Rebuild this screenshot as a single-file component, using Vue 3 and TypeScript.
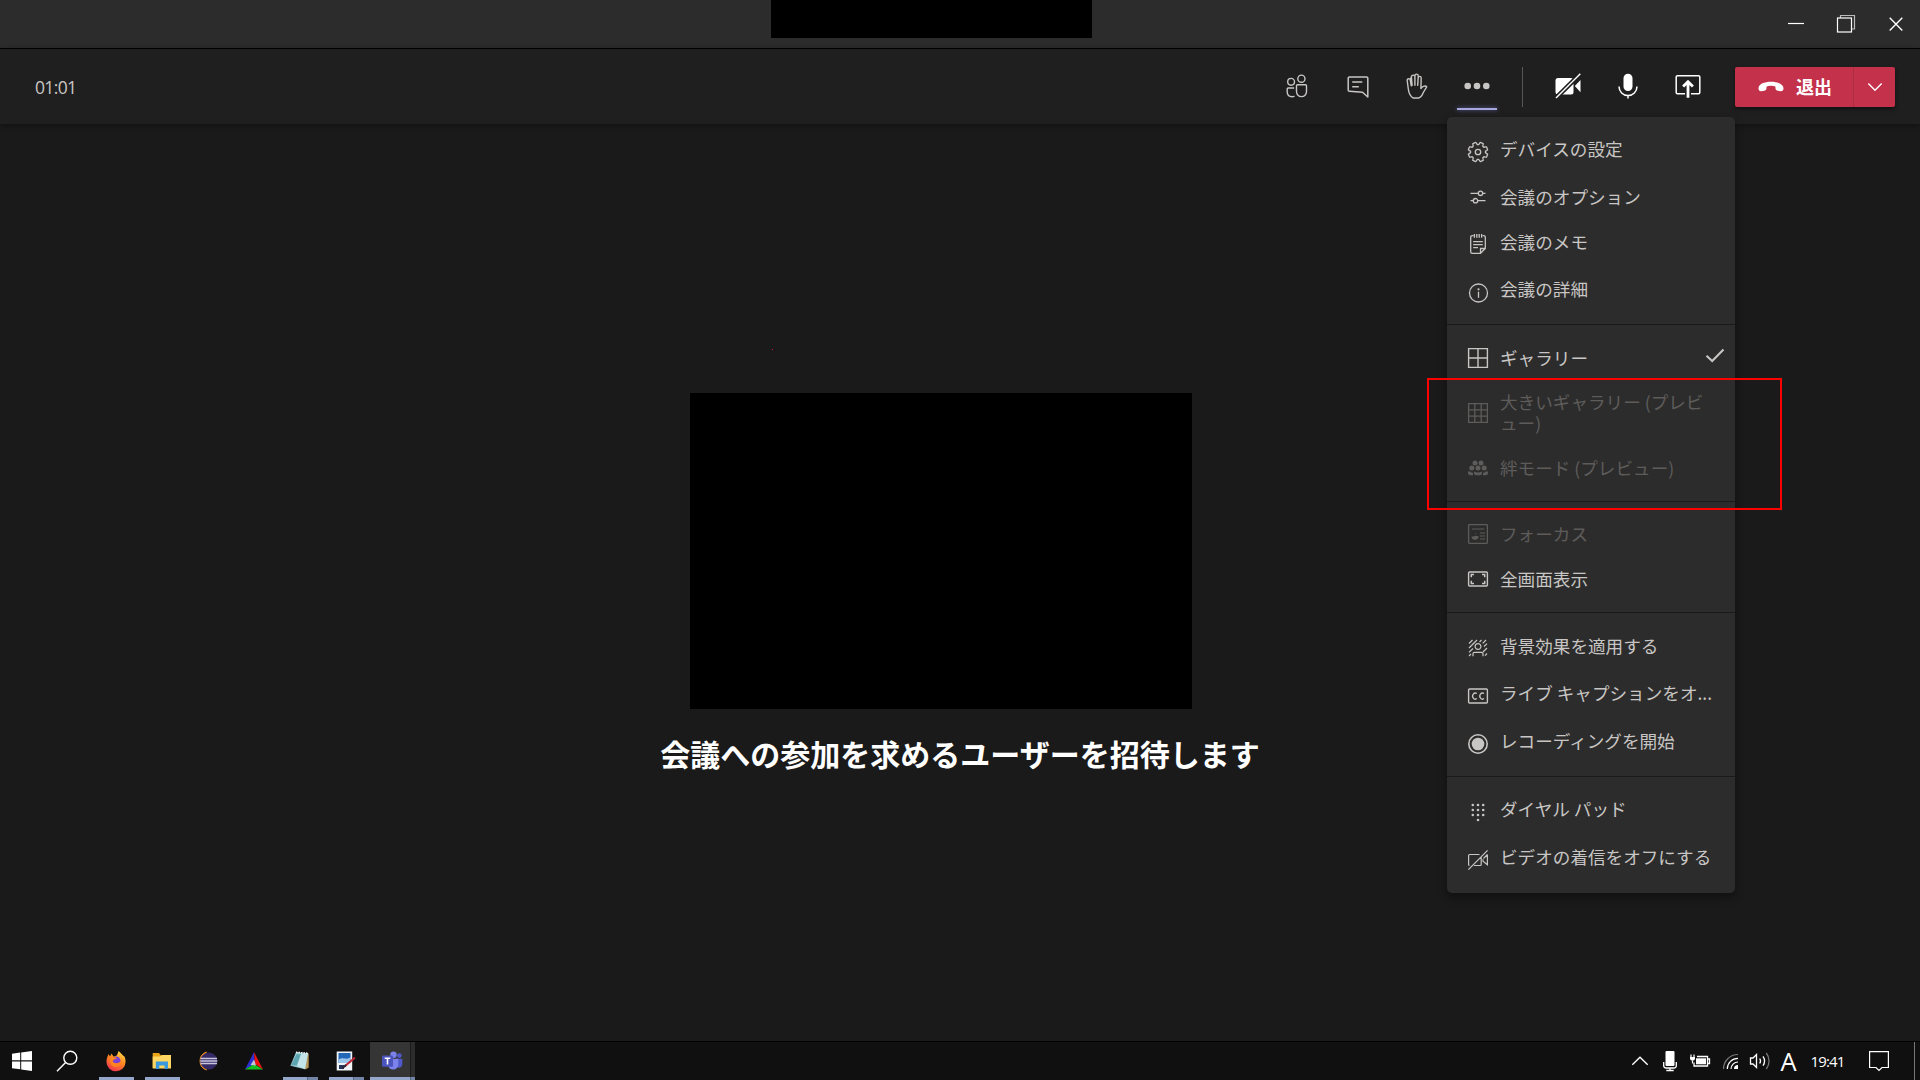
<script setup lang="ts">
interface MenuItem {
  icon: string
  label: string
  height: number
  lift: number
  disabled?: boolean
  checked?: boolean
  wrap?: boolean
}

// Eight-toothed gear outline, centred on the origin.
function gearPath(): string {
  const pts: string[] = []
  for (let i = 0; i < 8; i++) {
    const base = i * 45 + 22.5
    const ring: [number, number][] = [[-13, 8.8], [-9, 9.9], [9, 9.9], [13, 8.8], [16, 7.5], [29, 7.5]]
    for (const [deg, r] of ring) {
      const a = ((base + deg) * Math.PI) / 180
      pts.push(`${(r * Math.sin(a)).toFixed(2)} ${(-r * Math.cos(a)).toFixed(2)}`)
    }
  }
  return `M${pts.join('L')}Z`
}

const icons: Record<string, string> = {
  people:
    '<g fill="none" stroke="#c8c6c4" stroke-width="1.4"><circle cx="-5.9" cy="-4.2" r="3.4"/><circle cx="4.4" cy="-7.3" r="3.6"/><path d="M-2.8 2H-8.8a1 1 0 0 0-1 1V5.8c0 3 2 4.9 4.9 4.9 1 0 1.7-.2 2.4-.6"/><path d="M.5-1.2H8.5a1 1 0 0 1 1 1V5.6a5 5 0 0 1-10 0V-.2a1 1 0 0 1 1-1z"/></g>',
  chat:
    '<g fill="none" stroke="#c8c6c4" stroke-width="1.5" stroke-linejoin="round"><path d="M-8.6-9H8.6a1.2 1.2 0 0 1 1.2 1.2V11L4.5 6.2L-8.5 5.2a1.3 1.3 0 0 1-1.3-1.3V-7.8A1.2 1.2 0 0 1-8.6-9z"/><path d="M-5.8-3.9H4.3M-5.8.7H.8"/></g>',
  hand:
    '<path d="M-5.7-.2L-6.8-6a1.5 1.5 0 0 0-3 .5L-8.7 3C-8.2 7.5-6.5 10.2-4 12H1.5C4 11.5 5.3 9.3 6.3 6.5L9.7.9C8.6-1 5.5.2 3.9 2.6L4.2-8.1a1.5 1.5 0 0 0-3 0L.7-.8M1.2-8V-10.2a1.65 1.65 0 0 0-3.3 0V-.8M-2.1-9.2a1.6 1.6 0 0 0-3.5.1L-4.9-.8M-5.6-9L-6.9-6.5" fill="none" stroke="#c8c6c4" stroke-width="1.4" stroke-linejoin="round" stroke-linecap="round"/>',
  more: '<g fill="#c8c6c4"><circle cx="-9.3" r="3.3"/><circle r="3.3"/><circle cx="9.3" r="3.3"/></g>',
  camOff:
    '<g fill="#fff"><rect x="-12.5" y="-8" width="18" height="16.5" rx="2.5"/><path d="M6.8 0L12.5-6V6.2Z"/></g><path d="M-12.4 12.3L12.3-12.2" stroke="#201f1f" stroke-width="4.6"/><path d="M-12 12L12.3-12.2" stroke="#fff" stroke-width="1.4"/>',
  mic:
    '<rect x="-4.5" y="-12.3" width="9" height="17.3" rx="4.5" fill="#fff"/><path d="M-9 .6a9 9 0 0 0 18 0M0 9.600V12.5" fill="none" stroke="#fff" stroke-width="1.5"/>',
  share:
    '<rect x="-11.8" y="-10.2" width="23.6" height="18" rx="1.2" fill="none" stroke="#fff" stroke-width="1.5"/><path d="M0 6.5V9.5" stroke="#201f1f" stroke-width="6"/><path d="M0 11.8V-3M-4.9.6L0-4.3L4.9.6" fill="none" stroke="#fff" stroke-width="2.8"/>',
  phone:
    '<path d="M-12.500 1.3C-12.5-7.3 12.5-7.3 12.5 1.3C12.5 3.4 11.5 4.4 9.5 4.2L6.6 3.7C5 3.4 4.6 2.6 4.5 1.3L4.4-.6C2-1.5-2-1.5-4.4-.6L-4.5 1.3C-4.6 2.6-5 3.4-6.6 3.7L-9.5 4.2C-11.5 4.4-12.5 3.4-12.5 1.3Z" fill="#fff"/>',
  gear: `<g fill="none" stroke="currentColor" stroke-width="1.3" stroke-linejoin="round"><path d="${gearPath()}"/><circle r="2.7"/></g>`,
  sliders:
    '<g fill="none" stroke="currentColor" stroke-width="1.3"><path d="M-7.5-3.7H.1M4.9-3.7H7.5M-7.5 3.7H-4.9M-.1 3.7H7.5"/><circle cx="2.5" cy="-3.7" r="2.2"/><circle cx="-2.5" cy="3.7" r="2.2"/></g>',
  memo:
    '<g fill="none" stroke="currentColor" stroke-width="1.3"><path d="M-4.500-8.4H-5.7A1.600 1.6 0 0 0-7.3-6.8V7.7a1.6 1.6 0 0 0 1.6 1.6H2.5L7.3 4.5V-6.8a1.6 1.6 0 0 0-1.6-1.6H4.5M2.5 9.3V4.5H7.3"/><path d="M-3.6-10V-6.200M-1.2-10V-6.2M1.2-10V-6.2M3.6-10V-6.2M-4.8-2.3H4.8M-4.8.7H4.8M-4.8 3.7H0"/></g>',
  info:
    '<circle cx=".5" r="9" fill="none" stroke="currentColor" stroke-width="1.3"/><path d="M.5-1.3V4.8" stroke="currentColor" stroke-width="1.3"/><circle cx=".5" cy="-3.7" r="1.1" fill="currentColor"/>',
  grid2:
    '<path d="M-9.4-9.4H9.4V9.4H-9.4ZM0-9.4V9.4M-9.4 0H9.4" fill="none" stroke="currentColor" stroke-width="1.4"/>',
  grid3:
    '<path d="M-9.4-9.4H9.4V9.4H-9.4ZM-3.2-9.4V9.4M3.2-9.4V9.4M-9.4-3.2H9.4M-9.4 3.2H9.4" fill="none" stroke="currentColor" stroke-width="1.3"/>',
  together:
    '<g fill="currentColor"><circle cx="-3" cy="-5" r="2.5"/><circle cx="3" cy="-5" r="2.5"/><circle cx="-6.2" r="2.5"/><circle r="2.500"/><circle cx="6.2" r="2.5"/><path d="M-10 3.600h2a4.500 4.500 0 0 0 3 1.200v2.400h-2.500a2.500 2.500 0 0 1-2.500-2.500zM-4 3.600q4 1.800 8 0v1.100a2.500 2.500 0 0 1-2.500 2.500h-3a2.500 2.500 0 0 1-2.500-2.500zM10 3.600h-2a4.500 4.500 0 0 1-3 1.200v2.400h2.500a2.500 2.500 0 0 0 2.500-2.500z"/></g>',
  focus:
    '<rect x="-9.4" y="-9.4" width="18.8" height="18.8" rx=".8" fill="none" stroke="currentColor" stroke-width="1.3"/><path d="M-6.2-5H6.2M2-1H7M2 2H7M2 5H7" stroke="currentColor" stroke-width="1.2"/><path d="M-3-1.500V2H.5A3.500 3.500 0 1 1-6.500 2.500H-4A3 3 0 0 0-3-1.500Z" fill="currentColor"/>',
  fullscreen:
    '<rect x="-9.4" y="-7" width="18.8" height="14" rx="1" fill="none" stroke="currentColor" stroke-width="1.4"/><path d="M-6.7-1.8V-4.4H-4M4-4.4H6.7V-1.8M6.7 1.8V4.4H4M-4 4.4H-6.7V1.8" fill="none" stroke="currentColor" stroke-width="1.5"/>',
  background:
    '<g fill="none" stroke="currentColor" stroke-width="1.2"><circle cx="0" cy="-1.500" r="2.900"/><path d="M-5 8.200V5.800a1.500 1.500 0 0 1 1.500-1.500H3.500A1.500 1.500 0 0 1 5 5.800V8.200M-9-4.500L-5.500-8M-9 0L-1-8M-9 4.400L-5 .5M1.500-6L3.500-8M4.700-4.700L8-8M6-1.500L9-4.400M5 4L9 0M7 7.700L9 5.500M-9 8L-7 6"/></g>',
  cc:
    '<rect x="-9.4" y="-7" width="18.8" height="14" rx="1" fill="none" stroke="currentColor" stroke-width="1.4"/><path d="M-1.2-2.4A2.7 3 0 1 0-1.2 2.6M6-2.4A2.7 3 0 1 0 6 2.6" fill="none" stroke="currentColor" stroke-width="1.3"/>',
  record:
    '<circle r="9.2" fill="none" stroke="currentColor" stroke-width="1.6"/><circle r="6.3" fill="currentColor"/>',
  dialpad:
    '<g fill="currentColor"><circle cx="-5.200" cy="-7" r="1.300"/><circle cy="-7" r="1.300"/><circle cx="5.200" cy="-7" r="1.300"/><circle cx="-5.200" cy="-2" r="1.300"/><circle cy="-2" r="1.300"/><circle cx="5.200" cy="-2" r="1.300"/><circle cx="-5.200" cy="3" r="1.300"/><circle cy="3" r="1.300"/><circle cx="5.200" cy="3" r="1.300"/><circle cy="8" r="1.300"/></g>',
  videoOff:
    '<g fill="none" stroke="currentColor" stroke-width="1.2"><path d="M-8.5 5.5a1 1 0 0 1-.9-1V-4.5a1 1 0 0 1 1-1H1.5M3.2-2.5V4.5a1 1 0 0 1-1 1H-4M9.4-5.5V4.7L5 1.2V-.8M5.5-1.5L9.4-5.5M-9.6 9.6L9.6-9.6"/></g>',
  check: '<path d="M-8.5.8L-2.8 6L8.5-5.5" fill="none" stroke="currentColor" stroke-width="2.1"/>',
}

const leftTools = ['people', 'chat', 'hand', 'more']
const rightTools = ['camOff', 'mic', 'share']

const groups: MenuItem[][] = [
  [
    { icon: 'gear', label: 'デバイスの設定', height: 46, lift: 3.5 },
    { icon: 'sliders', label: '会議のオプション', height: 44, lift: 0.5 },
    { icon: 'memo', label: '会議のメモ', height: 50, lift: 2.5 },
    { icon: 'info', label: '会議の詳細', height: 47, lift: 4 },
  ],
  [
    { icon: 'grid2', label: 'ギャラリー', height: 44, lift: 0.5, checked: true },
    { icon: 'grid3', label: '大きいギャラリー (プレビュー)', height: 66, lift: 0.5, disabled: true, wrap: true },
    { icon: 'together', label: '絆モード (プレビュー)', height: 44, lift: 0.5, disabled: true },
  ],
  [
    { icon: 'focus', label: 'フォーカス', height: 44, lift: 0, disabled: true },
    { icon: 'fullscreen', label: '全画面表示', height: 46, lift: 0.5 },
  ],
  [
    { icon: 'background', label: '背景効果を適用する', height: 48, lift: 2.5 },
    { icon: 'cc', label: 'ライブ キャプションをオ...', height: 48, lift: 3.5 },
    { icon: 'record', label: 'レコーディングを開始', height: 48, lift: 3.5 },
  ],
  [
    { icon: 'dialpad', label: 'ダイヤル パッド', height: 47, lift: 2.5 },
    { icon: 'videoOff', label: 'ビデオの着信をオフにする', height: 50, lift: 3.5 },
  ],
]

const apps: { icon: string; state: string }[] = [
  {
    state: 'open',
    icon: '<defs><linearGradient id="ff" x1=".8" y1="0" x2=".3" y2="1"><stop offset="0" stop-color="#ffe14a"/><stop offset=".45" stop-color="#ff8a1f"/><stop offset="1" stop-color="#f0334f"/></linearGradient></defs><path d="M-9.500 1C-9.500-3-8.500-4-7.500-7L-6-4.500L-4.500-7.500L-2.500-4.500C-.5-5 1-5 1.500-7L2.500-10C5-8 6.500-6 7.500-5L8.500-4.500C9.500-2 9.700-.5 9.500 1.500A9.500 9 0 0 1-9.500 1Z" fill="url(#ff)"/><circle cx=".2" cy="-.3" r="4.300" fill="#7a3fd8"/><path d="M-5-3.500C-2-4.500 0-3.500 1-2.200C-1-2.300-2-1.500-3.500.300C-2 3 3 3 5.500-.5C6 4.500 1 7-3 5.200C-6 3.700-6.500 0-5-3.500Z" fill="#ff8420"/>',
  },
  {
    state: 'open',
    icon: '<path d="M-9.300-8H-3L-1-5.500H9V7H-9.300Z" fill="#e8a317"/><path d="M-9.300-4.500H-2L0-6H9V7.500H-9.300Z" fill="#ffd661"/><path d="M-6.200 8V.5H6V8H2.500V4.500H-2.700V8Z" fill="#3a98dd"/>',
  },
  {
    state: '',
    icon: '<path d="M-1.500-9A9.500 9.500 0 0 0-1.500 9A12 12 0 0 1-1.500-9Z" fill="#f7941e" stroke="#f7941e"/><circle cx=".8" r="8.600" fill="#352a66"/><path d="M-7.500-2.500H9M-7.700 0H9.300M-7.500 2.500H9" stroke="#c9c5de" stroke-width="1.700"/>',
  },
  {
    state: '',
    icon: '<path d="M0-9L-9 8.500L1 3Z" fill="#2d2fd0"/><path d="M0-9L9 8.500L1 3Z" fill="#ee1111"/><path d="M-9 8.500H9L0 3Z" fill="#12c022"/><path d="M0-1.500L-3.500 4L2 4.500Z" fill="#c5c5d8"/>',
  },
  {
    state: 'stack',
    icon: '<path d="M-4-8.500L8.700-7.500V6.500L5.500 8.500Z" fill="#b89455"/><path d="M-4-8.700L8-7.800L5 8.300L-9.600 4.800Z" fill="#9ed1d8"/><path d="M-3.500-7L1-6.700L-3 4.500L-9 4.500Z" fill="#5fa5b0"/><path d="M1-6.700L8-7.800L5 8.300L-3 4.500Z" fill="#cfeaed" opacity=".75"/><path d="M-4-8.700L8-7.800" stroke="#f3f6f6" stroke-width="1.500" stroke-dasharray="1.500 1"/>',
  },
  {
    state: 'stack',
    icon: '<rect x="-9.300" y="-9.500" width="15.500" height="19" fill="#f1f3f7"/><rect x="-7.500" y="-8" width="12" height="10" fill="#2266b8"/><path d="M-7.500-1C-3-5 1 0 4.500-4V2H-7.500Z" fill="#9cc5ea"/><rect x="-7" y="4" width="5" height="4" fill="#26355e"/><path d="M9-3.500L-1.500 5.500" stroke="#bd2634" stroke-width="2"/><path d="M0 4L-4 7.500" stroke="#2a2a3a" stroke-width="2.200"/>',
  },
  {
    state: 'active',
    icon: '<circle cx="7.300" cy="-5.400" r="2.400" fill="#5059c9"/><circle cx="1.500" cy="-6.200" r="3.200" fill="#7b83eb"/><path d="M4-2.200H10.300V3.500A3.300 3.300 0 0 1 4.500 5.500Z" fill="#5059c9"/><path d="M-4-2.200H6.300V4A5.200 5.200 0 0 1-4 4Z" fill="#7b83eb"/><rect x="-10" y="-5.500" width="11" height="11.200" rx="1" fill="#4b53bc"/><path d="M-7.300-2.800H-1.700M-4.500-2.800V3.500" stroke="#fff" stroke-width="1.600"/>',
  },
]
</script>

<template>
  <div class="desktop">
    <header class="titlebar">
      <div class="title-mask"></div>
      <div class="window-controls">
        <svg width="41" height="30" viewBox="-20.5 -15 41 30"><path d="M-7.500-.5H8.500" stroke="#fff" stroke-width="1.200" /></svg>
        <svg width="59" height="30" viewBox="-29.5 -15 59 30">
          <g fill="none" stroke="#fff" stroke-width="1.200">
            <path d="M-5-6V-8.500H9V5H6.500" stroke="#bbb" />
            <rect x="-8" y="-6" width="14" height="14" />
          </g>
        </svg>
        <svg width="41" height="30" viewBox="-20.5 -15 41 30"><path d="M-5.800-6.200L6.800 6.400M6.800-6.200L-5.800 6.400" stroke="#fff" stroke-width="1.400" /></svg>
      </div>
    </header>

    <section class="toolbar">
      <span class="timer">01:01</span>
      <nav class="tools">
        <button v-for="t in leftTools" :key="t" class="tool" :class="{ selected: t === 'more' }">
          <svg width="30" height="30" viewBox="-15 -15 30 30" v-html="icons[t]"></svg>
        </button>
        <i class="separator"></i>
        <button v-for="t in rightTools" :key="t" class="tool">
          <svg width="30" height="30" viewBox="-15 -15 30 30" v-html="icons[t]"></svg>
        </button>
      </nav>
      <div class="leave">
        <button class="leave-main">
          <svg width="26" height="16" viewBox="-13 -8 26 16" v-html="icons.phone"></svg>
          <span class="leave-label">退出</span>
        </button>
        <button class="leave-more">
          <svg width="18" height="12" viewBox="-9 -6 18 12"><path d="M-6.700-3.500L0 3.200L6.700-3.500" fill="none" stroke="#fff" stroke-width="1.400" /></svg>
        </button>
      </div>
    </section>

    <main class="stage">
      <i class="speck"></i>
      <div class="preview"></div>
      <h1 class="invite">会議への参加を求めるユーザーを招待します</h1>
    </main>

    <div class="menu">
      <ul v-for="(group, g) in groups" :key="g" class="group">
        <li
          v-for="item in group"
          :key="item.icon"
          class="item"
          :class="{ disabled: item.disabled }"
          :style="{ height: item.height + 'px' }"
        >
          <svg width="22" height="22" viewBox="-11 -11 22 22" v-html="icons[item.icon]"></svg>
          <span class="label" :class="{ wrap: item.wrap }" :style="{ marginBottom: item.lift * 2 + 'px' }">{{ item.label }}</span>
          <svg v-if="item.checked" class="check" width="22" height="22" viewBox="-11 -11 22 22" v-html="icons.check"></svg>
        </li>
      </ul>
    </div>
    <div class="highlight"></div>

    <footer class="taskbar">
      <div class="start">
        <svg width="20" height="20" viewBox="0 0 20 20"><path d="M0 2.700L8.200 1.600V9.300H0ZM9.200 1.400L20 0V9.300H9.200ZM0 10.500H8.200V18.300L0 17.200ZM9.200 10.500H20V20L9.200 18.500Z" fill="#fff" /></svg>
      </div>
      <div class="search">
        <svg width="22" height="22" viewBox="-11 -11 22 22"><g fill="none" stroke="#fff" stroke-width="1.400"><circle cx="3.300" cy="-3.200" r="6.500" /><path d="M-1.400 1.500L-10 10.200" /></g></svg>
      </div>
      <div class="apps">
        <div v-for="(app, i) in apps" :key="i" class="app" :class="app.state">
          <svg width="22" height="22" viewBox="-11 -11 22 22" v-html="app.icon"></svg>
        </div>
      </div>
      <div class="tray">
        <svg width="18" height="12" viewBox="-9 -6 18 12"><path d="M-7.700 3.800L0-3.800L7.700 3.800" fill="none" stroke="#fff" stroke-width="1.400" /></svg>
        <svg width="16" height="22" viewBox="-8 -11 16 22"><rect x="-4.500" y="-10" width="9" height="15" rx="1" fill="#fff" /><path d="M-6.300 1V4.500Q-6.300 7 -3.800 7H3.800Q6.300 7 6.300 4.500V1M0 7V9.500M-3.700 9.500H3.700" fill="none" stroke="#fff" stroke-width="1.300" /></svg>
        <svg width="22" height="22" viewBox="-11 -11 22 22"><path d="M-3-4.500H7.500V5H-6V1.500M8-2H9.500V2.500H8" fill="none" stroke="#fff" stroke-width="1.300" /><rect x="-4" y="-2.700" width="10" height="6" fill="#fff" /><path d="M-9-6.500V-4M-6-6.500V-4M-7.500-.5V2.500" stroke="#fff" stroke-width="1.200" /><path d="M-10-4H-5V-2Q-5.500-.3-7.500-.3Q-9.500-.3-10-2Z" fill="#fff" /></svg>
        <svg width="18" height="22" viewBox="-9 -11 18 22"><g fill="none" stroke-width="1.200"><path d="M-7.500 8A14.500 14.500 0 0 1 7-6.500" stroke="#777" /><path d="M-3.700 8A10.700 10.700 0 0 1 7-2.700M0 8A7 7 0 0 1 7 1" stroke="#fff" /></g><path d="M3 8A4 4 0 0 1 7 4V8Z" fill="#fff" /></svg>
        <svg width="22" height="22" viewBox="-11 -11 22 22"><g fill="none" stroke="#fff" stroke-width="1.300"><path d="M-9.500-3H-7L-3.500-6.500V6.500L-7 3H-9.500Z" /><path d="M-.3-2.500A4.500 4.500 0 0 1-.3 2.500M3-4.700A8.500 8.500 0 0 1 3 4.700" /><path d="M6.300-8A13 13 0 0 1 6.300 8" stroke="#777" /></g></svg>
        <span class="ime">A</span>
        <span class="clock">19:41</span>
        <svg width="22" height="22" viewBox="-11 -11 22 22"><path d="M-9.400-9.400H9.400V6.500H3L0 9.500L-3 6.500H-9.400Z" fill="none" stroke="#fff" stroke-width="1.200" /></svg>
      </div>
      <i class="peek"></i>
    </footer>
  </div>
</template>

<style>
body {
  margin: 0;
  background: #1b1a1a;
  overflow: hidden;
}
</style>

<style scoped>
.desktop {
  position: relative;
  box-sizing: border-box;
  display: flex;
  flex-direction: column;
  width: 1920px;
  height: 1080px;
  overflow: hidden;
  background: #1b1a1a;
  color: #c8c6c4;
  font-family: "Noto Sans CJK JP", sans-serif;
  font-size: 17.5px;
}
svg {
  display: block;
  flex: none;
}
button {
  padding: 0;
  border: 0;
  background: none;
  color: inherit;
  font: inherit;
}
.titlebar {
  display: flex;
  flex: none;
  height: 48px;
  padding-left: 771px;
  background: #2d2c2c;
  border-bottom: 1px solid #000;
}
.title-mask {
  width: 321px;
  height: 38px;
  background: #000;
}
.window-controls {
  display: flex;
  margin: 9px 4px 0 auto;
}
.toolbar {
  position: relative;
  z-index: 1;
  display: flex;
  flex: none;
  align-items: center;
  height: 75px;
  padding: 0 25px 0 35px;
  box-sizing: border-box;
  background: #201f1f;
  box-shadow: 0 1px 6px rgba(0, 0, 0, 0.4);
}
.timer {
  font-family: "Open Sans", sans-serif;
  font-size: 17.5px;
  letter-spacing: -0.65px;
}
.tools {
  display: grid;
  grid-template-columns: 60px 63px 55px 65px 25px 67px 53px 67px;
  margin: 0 13px 0 auto;
  height: 75px;
  align-items: center;
  justify-items: center;
}
.tool {
  margin: 0 1px 1px 0;
  position: relative;
}
.selected::after {
  content: "";
  position: absolute;
  left: -5px;
  bottom: -9px;
  width: 40px;
  height: 2px;
  background: #a6a7dc;
  box-shadow: 0 0 4px #6264a7;
}
.separator {
  width: 1px;
  height: 40px;
  background: #575655;
}
.leave {
  display: flex;
  width: 160px;
  height: 40px;
  border-radius: 2px;
  overflow: hidden;
  background: #c4314b;
  box-shadow: 0 2px 4px rgba(0, 0, 0, 0.5);
}
.leave-main {
  display: flex;
  align-items: center;
  gap: 12px;
  width: 119px;
  padding-left: 23px;
  box-sizing: border-box;
  border-right: 1px solid #ab2c43;
  color: #fff;
  font-weight: 700;
  font-size: 18px;
}
.leave-label {
  margin-bottom: 2px;
}
.leave-more {
  display: flex;
  flex: 1;
  align-items: center;
  justify-content: center;
}
.stage {
  position: relative;
  display: flex;
  flex: 1;
  flex-direction: column;
  align-items: center;
}
.speck {
  position: absolute;
  left: 772px;
  top: 225px;
  width: 1px;
  height: 1px;
  background: #d01030;
}
.preview {
  width: 502px;
  height: 316px;
  margin: 269px 38px 0 0;
  background: #000;
}
.invite {
  margin: 22px 0 0;
  color: #fff;
  font-size: 30px;
  line-height: 44px;
  font-weight: 700;
  white-space: nowrap;
}
.menu {
  position: absolute;
  z-index: 2;
  left: 1447px;
  top: 117px;
  width: 288px;
  height: 776px;
  border-radius: 5px;
  background: #2d2c2c;
  box-shadow: 0 4px 10px rgba(0, 0, 0, 0.4);
}
.group {
  margin: 0;
  padding: 12px 0 8px;
  list-style: none;
  border-bottom: 1px solid #1b1a1a;
}
.group:nth-child(2) {
  padding: 11px 0;
}
.group:nth-child(3) {
  padding: 10px 0;
}
.group:nth-child(4),
.group:nth-child(5) {
  padding-top: 11px;
}
.group:last-child {
  border-bottom: 0;
}
.item {
  display: flex;
  align-items: center;
  padding-left: 20px;
}
.label {
  width: 212px;
  margin-left: 11px;
  font-size: 17.6px;
  line-height: 26px;
  white-space: nowrap;
}
.label.wrap {
  line-height: 20.5px;
  white-space: normal;
  word-break: break-all;
}
.check {
  margin: 0 0 6px -8px;
}
.disabled {
  color: #5d5c5b;
}
.highlight {
  position: absolute;
  z-index: 3;
  left: 1427px;
  top: 378px;
  width: 351px;
  height: 128px;
  border: 2px solid #f00;
}
.taskbar {
  display: flex;
  flex: none;
  height: 38px;
  background: #101010;
  border-top: 1px solid #000;
}
.start,
.search,
.app {
  display: flex;
  align-items: center;
  justify-content: center;
}
.start {
  width: 44px;
}
.search {
  width: 46px;
}
.apps {
  display: flex;
  margin-left: 3px;
}
.app {
  position: relative;
  width: 46px;
}
.app::after {
  position: absolute;
  left: 6px;
  bottom: 0;
  width: 35px;
  height: 3px;
}
.open::after {
  content: "";
  background: #94a6c9;
}
.stack::after {
  content: "";
  background: linear-gradient(90deg, #94a6c9 24px, #566580 24px, #566580 25px, #7385a6 25px);
}
.active {
  background: linear-gradient(90deg, transparent 1px, #353535 1px, #353535 41px, #1c1c1c 41px, #1c1c1c 42px, #2c2c2c 42px);
}
.active::after {
  content: "";
  left: 1px;
  width: 45px;
  background: linear-gradient(90deg, #94a6c9 40px, #566580 40px, #566580 41px, #7385a6 41px);
}
.tray {
  display: grid;
  grid-template-columns: 32px 27px 34px 28px 30px 27px 53px 48px;
  align-items: center;
  justify-items: center;
  margin-left: auto;
  color: #fff;
  font-family: "Open Sans", sans-serif;
}
.ime {
  font-size: 25.5px;
  line-height: 30px;
}
.clock {
  margin-right: 2px;
  font-size: 15px;
  letter-spacing: -0.8px;
}
.peek {
  width: 1px;
  margin: 0 5px 0 11px;
  background: #777;
}
</style>
